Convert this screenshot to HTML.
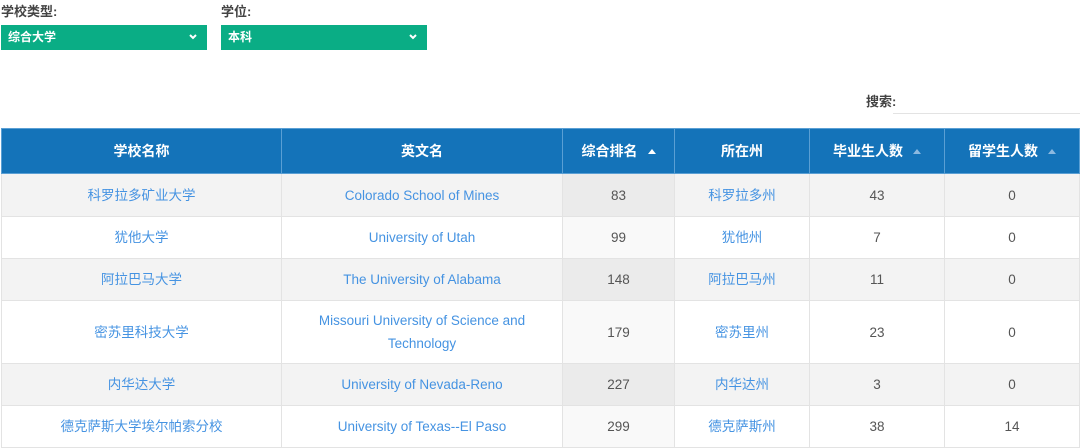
<!DOCTYPE html>
<html><head><meta charset="utf-8"><style>
*{margin:0;padding:0;box-sizing:border-box}
body{width:1080px;height:445px;overflow:hidden;background:#fff;font-family:"Liberation Sans","Noto Sans CJK SC",sans-serif;font-size:14px;position:relative}
.lbl{position:absolute;top:1px;font-weight:bold;color:#444;font-size:13px}
.sel{position:absolute;top:25px;height:25px;width:206px;background:#0aad85;color:#fff;font-weight:bold;font-size:12px;line-height:25px;padding-left:7px}
.sel svg{position:absolute;right:10px;top:9px}
.srch{position:absolute;left:866px;top:91px;font-weight:bold;color:#444;font-size:13px}
.line{position:absolute;left:893px;top:113px;width:187px;height:1px;background:#e3e3e3}
table{position:absolute;left:1px;top:128px;border-collapse:collapse;width:1078px;table-layout:fixed}
th{background:#1473b9;color:#fff;font-weight:bold;font-size:14px;height:45px;border:1px solid #5a9fd4;text-align:center}
td{border:1px solid #e3e3e3;text-align:center;color:#555;font-size:13.5px;height:42px;line-height:23px}
td a{color:#4593e2}
tr.o td{background:#f3f3f3}
tr.o td.s{background:#ebebeb}
tr.e td.s{background:#f9f9f9}
.ar{display:inline-block;width:0;height:0;border-left:4px solid transparent;border-right:4px solid transparent;border-bottom:5px solid #fff;margin-left:10px;vertical-align:2px}
.ar.d{border-bottom-color:#8cb9e0}
</style></head><body>
<div class="lbl" style="left:1px">学校类型:</div>
<div class="lbl" style="left:221px">学位:</div>
<div class="sel" style="left:1px">综合大学<svg width="8" height="6"><path d="M1 1L4 4L7 1" stroke="#fff" stroke-width="2" fill="none"/></svg></div>
<div class="sel" style="left:221px">本科<svg width="8" height="6"><path d="M1 1L4 4L7 1" stroke="#fff" stroke-width="2" fill="none"/></svg></div>
<div class="srch">搜索:</div><div class="line"></div>
<table>
<colgroup><col style="width:280px"><col style="width:281px"><col style="width:112px"><col style="width:135px"><col style="width:135px"><col style="width:135px"></colgroup>
<tr><th>学校名称</th><th>英文名</th><th>综合排名<span class="ar"></span></th><th>所在州</th><th>毕业生人数<span class="ar d"></span></th><th>留学生人数<span class="ar d"></span></th></tr>
<tr class="o"><td style="height:43px"><a>科罗拉多矿业大学</a></td><td><a>Colorado School of Mines</a></td><td class="s">83</td><td><a>科罗拉多州</a></td><td>43</td><td>0</td></tr>
<tr class="e"><td><a>犹他大学</a></td><td><a>University of Utah</a></td><td class="s">99</td><td><a>犹他州</a></td><td>7</td><td>0</td></tr>
<tr class="o"><td><a>阿拉巴马大学</a></td><td><a>The University of Alabama</a></td><td class="s">148</td><td><a>阿拉巴马州</a></td><td>11</td><td>0</td></tr>
<tr class="e"><td style="height:63px"><a>密苏里科技大学</a></td><td><a>Missouri University of Science and<br>Technology</a></td><td class="s">179</td><td><a>密苏里州</a></td><td>23</td><td>0</td></tr>
<tr class="o"><td><a>内华达大学</a></td><td><a>University of Nevada-Reno</a></td><td class="s">227</td><td><a>内华达州</a></td><td>3</td><td>0</td></tr>
<tr class="e"><td><a>德克萨斯大学埃尔帕索分校</a></td><td><a>University of Texas--El Paso</a></td><td class="s">299</td><td><a>德克萨斯州</a></td><td>38</td><td>14</td></tr>
</table>
</body></html>
